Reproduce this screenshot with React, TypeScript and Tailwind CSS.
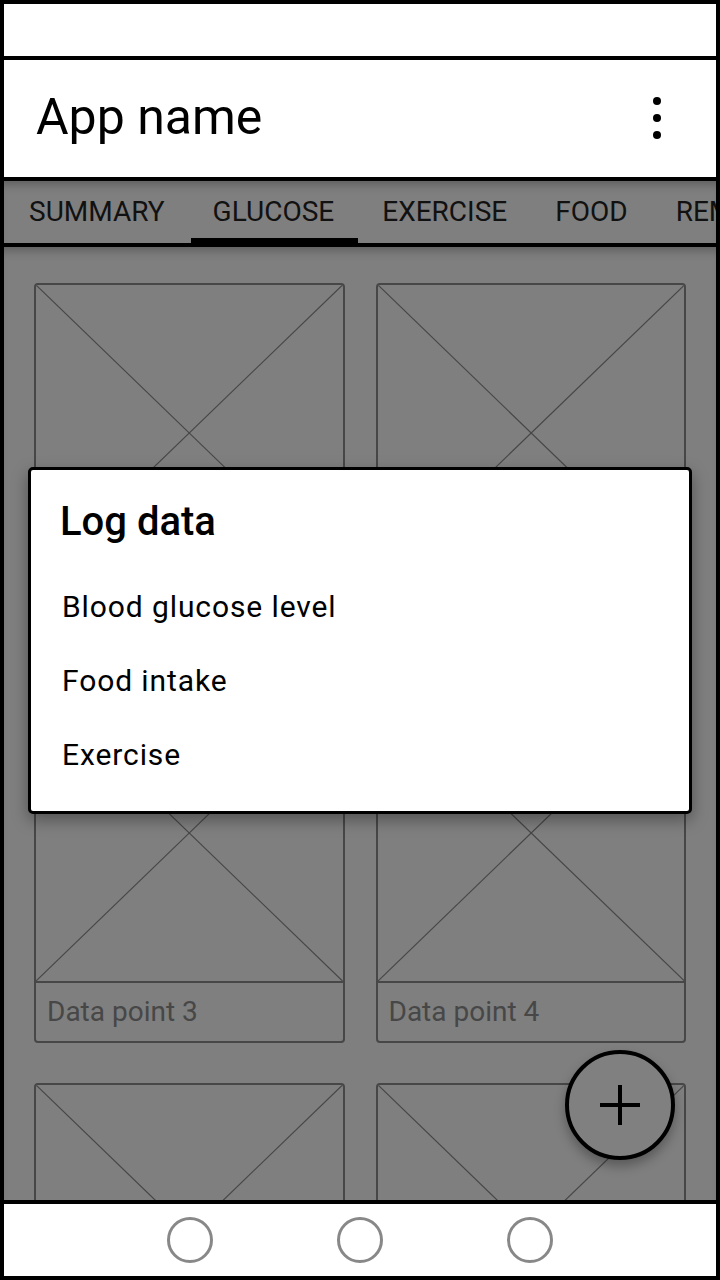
import React from "react";

type Card = { label: string };

const cards: Card[] = [
  { label: "Data point 1" },
  { label: "Data point 2" },
  { label: "Data point 3" },
  { label: "Data point 4" },
  { label: "Data point 5" },
  { label: "Data point 6" },
];

const tabs = ["SUMMARY", "GLUCOSE", "EXERCISE", "FOOD", "REMINDERS"];

function Placeholder() {
  return (
    <svg className="w-full h-full block" viewBox="0 0 100 100" preserveAspectRatio="none">
      <line x1="0" y1="0" x2="100" y2="100" stroke="#474747" strokeWidth="1.2" vectorEffect="non-scaling-stroke" />
      <line x1="100" y1="0" x2="0" y2="100" stroke="#474747" strokeWidth="1.2" vectorEffect="non-scaling-stroke" />
    </svg>
  );
}

function DataCard({ label }: Card) {
  return (
    <div className="h-[360px] border-2 border-[#474747] rounded-[4px] flex flex-col overflow-hidden">
      <div className="h-[298px] border-b-2 border-[#474747]">
        <Placeholder />
      </div>
      <div className="flex-1 flex items-center px-[11px] text-[28px] leading-none text-[#474747]">{label}</div>
    </div>
  );
}

export default function App() {
  return (
    <div
      className="w-[720px] h-[1280px] border-4 border-black flex flex-col overflow-hidden bg-white"
      style={{ fontFamily: "Roboto, 'Noto Sans', sans-serif" }}
    >
      {/* status bar */}
      <div className="h-[52px] bg-white border-b-4 border-black box-content" />

      {/* app bar */}
      <div className="h-[117px] bg-white border-b-4 border-black box-content flex items-center justify-between pl-[32px] pr-[55px]">
        <div className="text-[50px] leading-none text-black mb-[4px]">App name</div>
        <div className="flex flex-col gap-[9px] mb-[2px]">
          <div className="w-[8px] h-[8px] rounded-full bg-black" />
          <div className="w-[8px] h-[8px] rounded-full bg-black" />
          <div className="w-[8px] h-[8px] rounded-full bg-black" />
        </div>
      </div>

      {/* tabs */}
      <div className="h-[62px] bg-[#7f7f7f] border-b-4 border-black box-content flex pl-[1px] shadow-[inset_0_10px_10px_-6px_rgba(0,0,0,0.25)] overflow-hidden">
        {tabs.map((tab, index) => (
          <div key={index} className="relative shrink-0 flex items-center px-[24px] text-[28px] leading-none text-[#111]">
            {tab}
            {index === 1 && <div className="absolute left-[2px] right-0 bottom-0 h-[5px] bg-black" />}
          </div>
        ))}
      </div>

      {/* content */}
      <div className="relative flex-1 bg-[#7f7f7f] border-b-4 border-black box-border overflow-hidden shadow-[inset_0_10px_10px_-6px_rgba(0,0,0,0.25)]">
        <div className="grid grid-cols-2 gap-x-[31px] gap-y-[40px] px-[30px] pt-[36px]">
          {cards.map((card, index) => (
            <DataCard key={index} label={card.label} />
          ))}
        </div>

        {/* dialog */}
        <div className="absolute left-[24px] top-[220px] w-[664px] h-[347px] bg-white border-[3px] border-black rounded-[5px] shadow-[0_6px_16px_rgba(0,0,0,0.35)] pl-[29px] pt-[32px]">
          <div className="text-[40px] leading-[40px] font-medium text-black">Log data</div>
          <div className="mt-[28px] pl-[2px] text-[30px] tracking-[0.03em] text-black">
            <div className="leading-[74px]">Blood glucose level</div>
            <div className="leading-[74px]">Food intake</div>
            <div className="leading-[74px]">Exercise</div>
          </div>
        </div>

        {/* fab */}
        <div className="absolute left-[561px] top-[803px] w-[110px] h-[110px] rounded-full border-4 border-black bg-[#808080] shadow-[0_6px_12px_rgba(0,0,0,0.3)] flex items-center justify-center">
          <svg width="44" height="44" viewBox="0 0 44 44">
            <line x1="22" y1="2" x2="22" y2="42" stroke="black" strokeWidth="4" />
            <line x1="2" y1="22" x2="42" y2="22" stroke="black" strokeWidth="4" />
          </svg>
        </div>
      </div>

      {/* bottom nav */}
      <div className="h-[72px] bg-white flex items-center justify-center gap-[124px]">
        <div className="w-[46px] h-[46px] rounded-full border-[3px] border-[#888]" />
        <div className="w-[46px] h-[46px] rounded-full border-[3px] border-[#888]" />
        <div className="w-[46px] h-[46px] rounded-full border-[3px] border-[#888]" />
      </div>
    </div>
  );
}
